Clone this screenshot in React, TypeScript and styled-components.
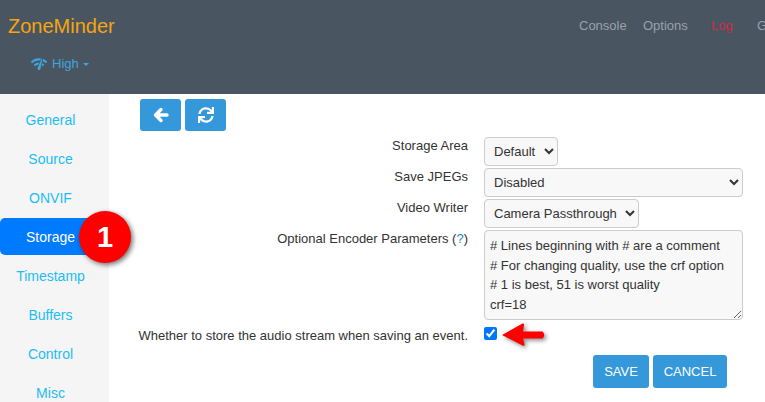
import React from "react";
import styled, { createGlobalStyle } from "styled-components";
import { FaSync } from "react-icons/fa";
import { MdNetworkCheck } from "react-icons/md";

const GlobalStyle = createGlobalStyle`
  html, body {
    margin: 0;
    padding: 0;
    height: 100%;
    overflow: hidden;
    background: #fff;
    font-family: "Liberation Sans", Arial, sans-serif;
  }
`;

const Page = styled.div`
  position: relative;
  width: 765px;
  height: 402px;
  overflow: hidden;
  display: flex;
  flex-direction: column;
`;

const Header = styled.header`
  height: 94px;
  flex: none;
  background: #495561;
  display: flex;
  flex-direction: column;
`;

const TopRow = styled.div`
  display: flex;
  justify-content: space-between;
  padding: 14px 0 0 8px;
  height: 40px;
`;

const Brand = styled.div`
  font-size: 20px;
  line-height: 25px;
  color: #f5a511;
`;

const Nav = styled.nav`
  display: flex;
  width: 186px;
  flex: none;
  padding-top: 4px;
  font-size: 13px;
  line-height: 16px;
  white-space: nowrap;
  overflow: hidden;
`;

const NavLink = styled.a<{ $width: number; $active?: boolean }>`
  flex: none;
  width: ${(p) => p.$width}px;
  color: ${(p) => (p.$active ? "#cb2d47" : "#9aa2aa")};
`;

const StatusRow = styled.div`
  display: flex;
  align-items: center;
  gap: 4px;
  padding: 1px 0 0 30px;
  color: #3fa5de;
  font-size: 13px;
  line-height: 16px;
`;

const Caret = styled.span`
  width: 0;
  height: 0;
  border-top: 3px solid #3fa5de;
  border-left: 3px solid transparent;
  border-right: 3px solid transparent;
`;

const Body = styled.div`
  flex: 1;
  display: flex;
  min-height: 0;
`;

const Sidebar = styled.aside`
  width: 109px;
  flex: none;
  background: #f5f5f5;
  padding-top: 7px;
  display: flex;
  flex-direction: column;
  gap: 2px;
  overflow: hidden;
`;

const SideItem = styled.a<{ $active?: boolean }>`
  flex: none;
  height: 37px;
  width: 101px;
  display: flex;
  align-items: center;
  justify-content: center;
  font-size: 14px;
  border-radius: 5px;
  color: ${(p) => (p.$active ? "#fff" : "#1ebcf5")};
  background: ${(p) => (p.$active ? "#007bff" : "transparent")};
`;

const Content = styled.main`
  flex: 1;
  min-width: 0;
  padding: 5px 22px 0 31px;
`;

const Toolbar = styled.div`
  display: flex;
  gap: 4px;
  margin-bottom: 6px;
`;

const IconButton = styled.button`
  width: 41px;
  height: 32px;
  padding: 0;
  border: 0;
  border-radius: 3px;
  background: #3498db;
  color: #fff;
  font-size: 16px;
  display: flex;
  align-items: center;
  justify-content: center;
`;

const FormGrid = styled.div`
  display: grid;
  grid-template-columns: 328px 259px;
  column-gap: 16px;
  row-gap: 2px;
`;

const Label = styled.label<{ $top?: number }>`
  justify-self: end;
  margin-top: ${(p) => p.$top ?? 1}px;
  font-size: 13px;
  line-height: 16px;
  color: #333;
  white-space: nowrap;
`;

const Help = styled.a`
  color: #2a7fc4;
`;

const Select = styled.select<{ $full?: boolean }>`
  justify-self: start;
  width: ${(p) => (p.$full ? "100%" : "auto")};
  height: 29px;
  padding: 0 5px;
  border: 1px solid #ccc;
  border-radius: 4px;
  background: #f8f8f8;
  color: #333;
  font-family: inherit;
  font-size: 13px;
`;

const Notes = styled.textarea`
  box-sizing: border-box;
  width: 100%;
  height: 90px;
  padding: 5px;
  border: 1px solid #ccc;
  border-radius: 4px;
  background: #f8f8f8;
  color: #333;
  font-family: inherit;
  font-size: 13px;
  line-height: 19.5px;
  display: block;
`;

const Check = styled.input`
  margin: 5px 0 0;
  width: 13px;
  height: 13px;
  justify-self: start;
`;

const Actions = styled.div`
  display: flex;
  justify-content: flex-end;
  gap: 4px;
  margin-top: 11px;
  padding-right: 16px;
`;

const ActionButton = styled.button<{ $width: number }>`
  width: ${(p) => p.$width}px;
  height: 33px;
  padding: 0;
  border: 0;
  border-radius: 3px;
  background: #3498db;
  color: #fff;
  font-family: inherit;
  font-size: 13px;
`;

const Badge = styled.div`
  position: absolute;
  left: 79px;
  top: 211px;
  width: 52px;
  height: 52px;
  border-radius: 50%;
  background: #fe0000;
  color: #fff;
  font-size: 29px;
  font-weight: 700;
  display: flex;
  align-items: center;
  justify-content: center;
  box-shadow: 2px 2px 5px rgba(0, 0, 0, 0.55);
`;

const ArrowMark = styled.svg`
  position: absolute;
  left: 498px;
  top: 320px;
  filter: drop-shadow(2px 2px 2px rgba(0, 0, 0, 0.45));
`;

const notes = `# Lines beginning with # are a comment
# For changing quality, use the crf option
# 1 is best, 51 is worst quality
crf=18`;

const sections = ["General", "Source", "ONVIF", "Storage", "Timestamp", "Buffers", "Control", "Misc"];

export default function App() {
  return (
    <Page>
      <GlobalStyle />
      <Header>
        <TopRow>
          <Brand>ZoneMinder</Brand>
          <Nav>
            <NavLink $width={64}>Console</NavLink>
            <NavLink $width={68}>Options</NavLink>
            <NavLink $width={46} $active>Log</NavLink>
            <NavLink $width={30}>Groups</NavLink>
          </Nav>
        </TopRow>
        <StatusRow>
          <MdNetworkCheck size={18} />
          <span>High</span>
          <Caret />
        </StatusRow>
      </Header>
      <Body>
        <Sidebar>
          {sections.map((s) => (
            <SideItem key={s} $active={s === "Storage"}>{s}</SideItem>
          ))}
        </Sidebar>
        <Content>
          <Toolbar>
            <IconButton>
              <svg width="16" height="16" viewBox="0 0 16 16" fill="none" stroke="#fff" strokeWidth="3.4" strokeLinejoin="round" strokeLinecap="round">
                <path d="M8 2.500 L2.500 8 L8 13.500 M3 8 H14" />
              </svg>
            </IconButton>
            <IconButton><FaSync /></IconButton>
          </Toolbar>
          <FormGrid>
            <Label>Storage Area</Label>
            <Select defaultValue="Default"><option>Default</option></Select>
            <Label>Save JPEGs</Label>
            <Select $full defaultValue="Disabled"><option>Disabled</option></Select>
            <Label>Video Writer</Label>
            <Select defaultValue="Camera Passthrough"><option>Camera Passthrough</option></Select>
            <Label>Optional Encoder Parameters (<Help>?</Help>)</Label>
            <Notes defaultValue={notes} />
            <Label $top={6}>Whether to store the audio stream when saving an event.</Label>
            <Check type="checkbox" defaultChecked />
          </FormGrid>
          <Actions>
            <ActionButton $width={56}>SAVE</ActionButton>
            <ActionButton $width={74}>CANCEL</ActionButton>
          </Actions>
        </Content>
      </Body>
      <Badge>1</Badge>
      <ArrowMark width="54" height="30" viewBox="0 0 54 30">
        <path d="M4 15 L24.500 3.500 Q26.500 3 26 5.500 L25 11.500 L44.500 11.500 Q48 15 44.500 18.500 L25 18.500 L26.500 24 Q27 26.500 24.500 25.500 Z" fill="#fe0000" />
      </ArrowMark>
    </Page>
  );
}
